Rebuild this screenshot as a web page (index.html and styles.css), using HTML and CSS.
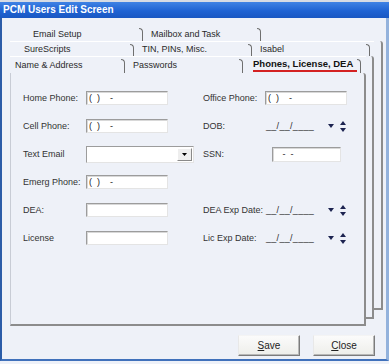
FILE: index.html
```html
<!DOCTYPE html>
<html lang="en">
<head>
  <meta charset="UTF-8" />
  <title>PCM Users Edit Screen</title>
  <link rel="stylesheet" href="styles.css">
</head>
<body>
  <div class="window">
    <div class="topstrip"></div>
    <div class="titlebar">PCM Users Edit Screen</div>

    <div class="client">
      <div class="stack">
        <!-- back page -->
        <div class="page page3">
          <div class="tabrow">
            <span class="tab">Email Setup</span><span class="sep"></span>
            <span class="tab">Mailbox and Task</span><span class="sep"></span>
          </div>
          <div class="body"></div>
        </div>

        <div class="page page2">
          <div class="tabrow">
            <span class="tab">SureScripts</span><span class="sep"></span>
            <span class="tab">TIN, PINs, Misc.</span><span class="sep"></span>
            <span class="tab">Isabel</span><span class="sep"></span>
          </div>
          <div class="body"></div>
        </div>

        <!-- front page -->
        <div class="page page1">
          <div class="tabrow">
            <span class="tab">Name &amp; Address</span><span class="sep"></span>
            <span class="tab">Passwords</span><span class="sep"></span>
            <span class="tab active"><span class="label">Phones, License, DEA</span></span><span class="sep"></span>
          </div>
          <div class="body form">
            <label>Home Phone:</label>
            <input class="field" type="text" value="(  )    -">
            <label>Office Phone:</label>
            <input class="field" type="text" value="(  )    -">

            <label>Cell Phone:</label>
            <input class="field" type="text" value="(  )    -">
            <label>DOB:</label>
            <div class="date">
              <span class="mask">__/__/____</span>
              <svg class="drop" width="6" height="4" viewBox="0 0 6 4"><path d="M0 0h6L3 4z" fill="#1c2350"/></svg>
              <svg class="spin" width="6" height="11" viewBox="0 0 6 11"><path d="M3 0L6 4H0z M0 7h6L3 11z" fill="#1c2350"/></svg>
            </div>

            <label>Text Email</label>
            <div class="combo">
              <span class="combo-btn"><svg width="5" height="3" viewBox="0 0 5 3"><path d="M0 0h5L2.5 3z" fill="#000"/></svg></span>
            </div>
            <label>SSN:</label>
            <input class="field ssn" type="text" value="   -  -">

            <label>Emerg Phone:</label>
            <input class="field" type="text" value="(  )    -">
            <span></span>
            <span></span>

            <label>DEA:</label>
            <input class="field" type="text" value="">
            <label>DEA Exp Date:</label>
            <div class="date">
              <span class="mask">__/__/____</span>
              <svg class="drop" width="6" height="4" viewBox="0 0 6 4"><path d="M0 0h6L3 4z" fill="#1c2350"/></svg>
              <svg class="spin" width="6" height="11" viewBox="0 0 6 11"><path d="M3 0L6 4H0z M0 7h6L3 11z" fill="#1c2350"/></svg>
            </div>

            <label>License</label>
            <input class="field" type="text" value="">
            <label>Lic Exp Date:</label>
            <div class="date">
              <span class="mask">__/__/____</span>
              <svg class="drop" width="6" height="4" viewBox="0 0 6 4"><path d="M0 0h6L3 4z" fill="#1c2350"/></svg>
              <svg class="spin" width="6" height="11" viewBox="0 0 6 11"><path d="M3 0L6 4H0z M0 7h6L3 11z" fill="#1c2350"/></svg>
            </div>
          </div>
        </div>
      </div>

      <div class="buttons">
        <button class="btn"><u>S</u>ave</button>
        <button class="btn"><u>C</u>lose</button>
      </div>
    </div>
  </div>
</body>
</html>
```

FILE: styles.css
```css
:root {
  --bg: #eef1f8;
  --edge: #8c8c8c;
  --hook: #6f6f6f;
  --text: #2a2a2a;
}

body {
  margin: 0;
  font-family: 'Liberation Sans', Arial, sans-serif;
  font-size: 9px;
  color: var(--text);
  background: var(--bg);
}

.window {
  width: 389px;
}

.topstrip {
  height: 2px;
  background: #d6dbe4;
}

.titlebar {
  height: 16px;
  line-height: 16px;
  padding-left: 3px;
  color: #fff;
  font-size: 10px;
  font-weight: bold;
  background: linear-gradient(#3f82e4, #1f63d3 55%, #1957c2);
}

.client {
  height: 343px;
  box-sizing: border-box;
  display: flex;
  flex-direction: column;
  padding: 8px 3px 3px 8px;
  border-left: 2px solid #2b5ca8;
  border-right: 3px solid #93b2dc;
  border-bottom: 2px solid #4071bb;
  background: var(--bg);
}

/* stacked tab pages */
.stack {
  display: grid;
  height: 300px;
}

.page {
  grid-area: 1 / 1;
  display: flex;
  flex-direction: column;
  background: var(--bg);
}

.page3 { margin: 0 0 16px 0; }
.page2 { margin: 15px 9px 7px 0; border-top: 1px solid #fff; }
.page1 { margin: 30px 17px 0 0; border-top: 1px solid #fff; }

.tabrow {
  display: flex;
  height: 15px;
  flex-shrink: 0;
}

.page1 .tabrow { height: 16px; }
.page2 .tabrow { height: 14px; padding-left: 9px; }
.page3 .tabrow { padding-left: 18px; }

.tab {
  width: 114px;
  box-sizing: border-box;
  padding-left: 8px;
  display: flex;
  align-items: center;
  white-space: nowrap;
  overflow: hidden;
}

.tab:first-child {
  width: 111px;
  padding-left: 5px;
}

.sep {
  width: 4px;
  margin-top: 2px;
  box-sizing: border-box;
  border-top: 1px solid var(--hook);
  border-right: 1px solid var(--hook);
  border-top-right-radius: 4px;
}

.tab.active {
  padding-left: 10px;
  align-items: flex-end;
  padding-bottom: 1px;
}

.tab.active .label {
  display: block;
  width: 100%;
  line-height: 12px;
  font-size: 9.5px;
  font-weight: bold;
  color: #111;
  border-bottom: 2px solid #d42222;
}

.body {
  flex: 1;
  border-right: 2px solid var(--edge);
  border-bottom: 2px solid var(--edge);
  border-top-right-radius: 3px;
}

/* form on the front page */
.form {
  border-left: 1px solid #c8ccd5;
  display: grid;
  grid-template-columns: 63px 117px 62px 1fr;
  grid-auto-rows: 28px;
  align-content: start;
  align-items: center;
  padding: 11px 0 0 12px;
}

.form label {
  white-space: nowrap;
  color: #333;
}

.field {
  width: 82px;
  height: 14px;
  box-sizing: border-box;
  margin: 0;
  padding: 0 2px;
  border: 1px solid;
  border-color: #9c9c9c #e4e4e4 #e4e4e4 #9c9c9c;
  box-shadow: inset 1px 1px 0 #d8d8d8;
  background: #fff;
  font-family: 'Liberation Sans', Arial, sans-serif;
  font-size: 9px;
  color: #222;
  outline: none;
}

.field.ssn {
  width: 69px;
  height: 15px;
  margin-left: 7px;
}

.combo {
  width: 108px;
  height: 17px;
  box-sizing: border-box;
  display: flex;
  justify-content: flex-end;
  align-items: center;
  padding-right: 1px;
  border: 1px solid;
  border-color: #9c9c9c #e4e4e4 #e4e4e4 #9c9c9c;
  background: #fff;
}

.combo-btn {
  width: 15px;
  height: 13px;
  box-sizing: border-box;
  display: flex;
  align-items: center;
  justify-content: center;
  background: #eeeeee;
  border: 1px solid;
  border-color: #fff #8a8a8a #8a8a8a #fff;
}

.date {
  display: flex;
  align-items: center;
  padding-left: 1px;
}

.mask {
  width: 50px;
  letter-spacing: 0.3px;
}

.drop { margin-left: 12px; }
.spin { margin-left: 6px; }

.buttons {
  display: flex;
  justify-content: flex-end;
  gap: 13px;
  margin-top: 9px;
  padding-right: 8px;
}

.btn {
  width: 62px;
  height: 21px;
  margin: 0;
  padding: 0;
  font-family: 'Liberation Sans', Arial, sans-serif;
  font-size: 10px;
  color: #222;
  background: linear-gradient(#fbfbfb, #eeeeea);
  border: 1px solid;
  border-color: #f4f4f4 #7c7c7c #7c7c7c #e8e8e8;
  box-shadow: inset -1px -1px 0 #b8b8b8;
}
```
